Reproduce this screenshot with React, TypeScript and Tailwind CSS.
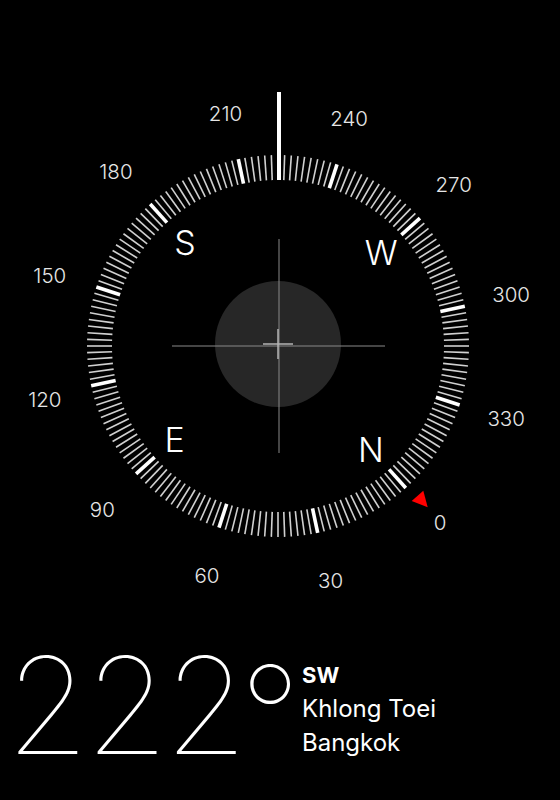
import React from "react";

const CX = 278;
const CY = 346;
const HEADING = 222;

// screen position for a compass degree, clockwise from top
const pos = (deg: number, r: number) => {
  const a = ((deg - HEADING) * Math.PI) / 180;
  return { x: CX + Math.sin(a) * r, y: CY - Math.cos(a) * r };
};

function Dial() {
  const ticks = [];
  for (let d = 0; d < 360; d += 2) {
    const major = d % 30 === 0;
    const a = pos(d, 166);
    const b = pos(d, 191);
    ticks.push(
      <line
        key={d}
        x1={a.x}
        y1={a.y}
        x2={b.x}
        y2={b.y}
        stroke={major ? "#ffffff" : "#d0d0d0"}
        strokeWidth={major ? 3.6 : 1.6}
      />
    );
  }

  const labels = [];
  for (let d = 0; d < 360; d += 30) {
    const p = pos(d - 0.7, 239);
    labels.push(
      <text
        key={d}
        x={p.x}
        y={p.y + 1}
        textAnchor="middle"
        dominantBaseline="central"
        fill="#e6e6e6"
        fontSize="20.5"
        fontWeight={300}
      >
        {d}
      </text>
    );
  }

  const cardinals = [
    { d: 0, t: "N" },
    { d: 90, t: "E" },
    { d: 180, t: "S" },
    { d: 270, t: "W" },
  ].map((c) => {
    const p = pos(c.d, 139);
    return (
      <text
        key={c.t}
        x={p.x}
        y={p.y}
        textAnchor="middle"
        dominantBaseline="central"
        fill="#ffffff"
        fontSize="34"
        fontWeight={300}
      >
        {c.t}
      </text>
    );
  });

  return (
    <svg width="560" height="638" viewBox="0 0 560 638" className="block" style={{ fontFamily: "Inter, 'Liberation Sans', sans-serif" }}>
      {/* level bubble */}
      <circle cx="278" cy="344" r="63" fill="#272727" />
      <line x1="279" y1="239" x2="279" y2="453" stroke="#8a8a8a" strokeWidth="1" />
      <line x1="172" y1="346" x2="385" y2="346" stroke="#8a8a8a" strokeWidth="1" />
      <line x1="263" y1="344" x2="293" y2="344" stroke="#b5b5b5" strokeWidth="1.5" />
      <line x1="278" y1="329" x2="278" y2="359" stroke="#b5b5b5" strokeWidth="1.5" />

      {ticks}
      {labels}
      {cardinals}

      {/* heading marker */}
      <rect x="277" y="92" width="4" height="88" fill="#ffffff" />

      {/* north pointer */}
      <polygon points="411.7,501 423.3,490.7 427.7,507.3" fill="#ff0000" />
    </svg>
  );
}

export default function App() {
  return (
    <div className="w-[560px] h-[800px] bg-black text-white overflow-hidden font-['Inter','Liberation_Sans',sans-serif]">
      <Dial />
      <div className="flex pl-[6px]">
        <div className="flex items-start w-[296px] font-thin leading-none">
          <span className="text-[134px] tracking-[-4px]">222</span>
          <span className="text-[134px] pt-[9px] -ml-[4px]">°</span>
        </div>
        <div className="flex flex-col pt-[20px]">
          <span className="text-[22px] font-bold leading-[34px]">SW</span>
          <span className="text-[24px] leading-[34px]">Khlong Toei</span>
          <span className="text-[24px] leading-[34px]">Bangkok</span>
        </div>
      </div>
    </div>
  );
}
